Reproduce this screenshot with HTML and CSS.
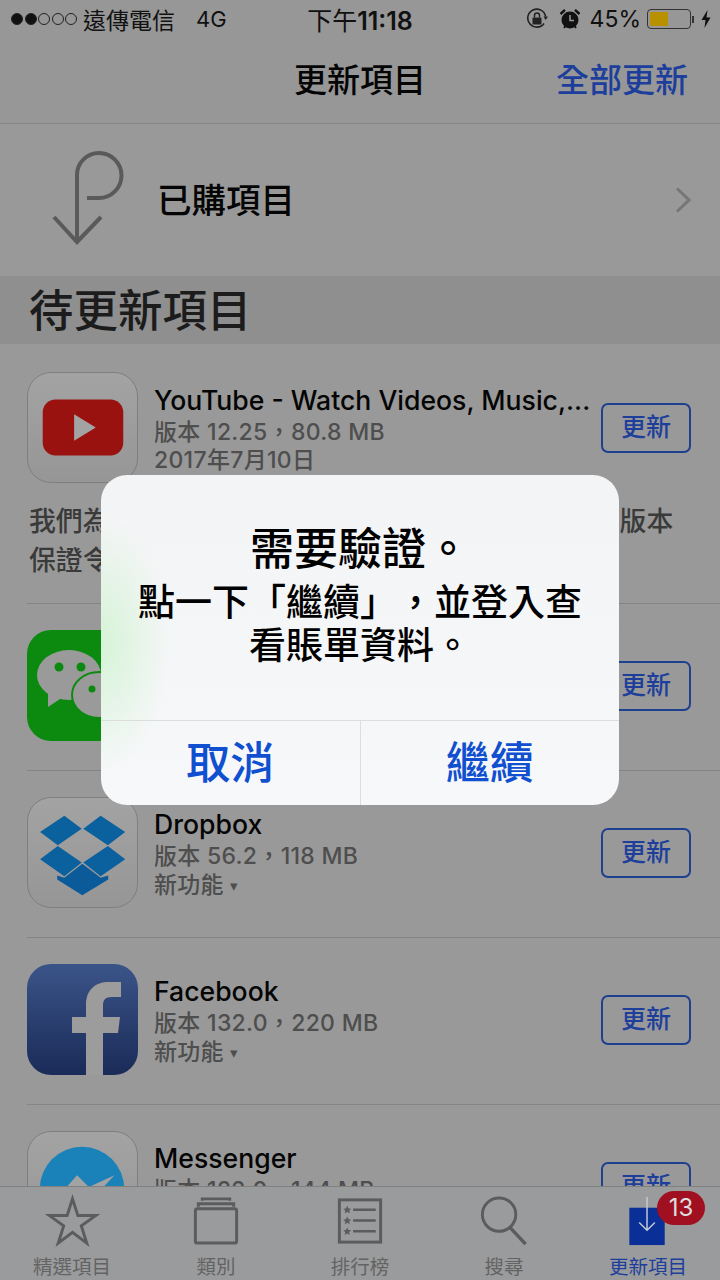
FILE: index.html
```html
<!DOCTYPE html>
<html lang="zh-Hant">
<head>
    <meta charset="UTF-8">
    <meta name="viewport" content="width=device-width, initial-scale=1.0">
    <title>更新項目</title>
    <link rel="stylesheet" href="styles.css">
</head>
<body>
<div class="screen">
    <!-- Status bar -->
    <div class="status-bar">
        <div class="status-left">
            <span class="signal">
                <i class="dot on"></i><i class="dot on"></i><i class="dot"></i><i class="dot"></i><i class="dot"></i>
            </span>
            <span class="carrier">遠傳電信</span>
            <span class="network">4G</span>
        </div>
        <div class="status-time">下午<b>11:18</b></div>
        <div class="status-right">
            <svg class="lock-icon" width="22" height="22" viewBox="0 0 22 22">
                <path d="M18 15.5A9 9 0 1 1 19.6 8.500" fill="none" stroke="#222" stroke-width="1.600"/>
                <path d="M17.500 8.500L22 8.500L19.600 12z" fill="#222"/>
                <rect x="6.500" y="9.500" width="9" height="7" rx="1" fill="#222"/>
                <path d="M8.500 9.500V7.500a2.500 2.500 0 0 1 5 0v2" fill="none" stroke="#222" stroke-width="1.500"/>
            </svg>
            <svg class="alarm-icon" width="22" height="22" viewBox="0 0 22 22">
                <circle cx="11" cy="12" r="8.500" fill="#111"/>
                <path d="M11 7V12.500H15" fill="none" stroke="#999" stroke-width="1.500"/>
                <path d="M1.500 6L6 1.800M20.500 6L16 1.800" stroke="#111" stroke-width="2.400"/>
                <path d="M5 20L6.500 18M17 20L15.500 18" stroke="#111" stroke-width="2"/>
            </svg>
            <span class="percent">45%</span>
            <span class="battery"><i class="battery-fill"></i></span>
            <i class="battery-nub"></i>
            <svg class="bolt" width="10" height="18" viewBox="0 0 10 18"><path d="M6.500 0L0.500 10H4.500L3.500 18L9.500 7.500H5.500z" fill="#111"/></svg>
        </div>
    </div>

    <!-- Nav bar -->
    <div class="nav-bar">
        <h1 class="nav-title">更新項目</h1>
        <a class="nav-action">全部更新</a>
    </div>

    <!-- Purchased -->
    <div class="purchased">
        <svg class="purchased-icon" width="80" height="100" viewBox="0 0 80 100">
            <path d="M29 92V25A22 22 0 0 1 51 3A22.500 22.500 0 0 1 51 48H39" fill="none" stroke="#5a5a5a" stroke-width="4"/>
            <path d="M6 67L29 92L53 67" fill="none" stroke="#5a5a5a" stroke-width="4"/>
        </svg>
        <span class="purchased-label">已購項目</span>
        <svg class="chevron" width="16" height="26" viewBox="0 0 16 26"><path d="M2 1.500L14 13L2 24.500" fill="none" stroke="#767676" stroke-width="3"/></svg>
    </div>

    <h2 class="section-title">待更新項目</h2>

    <!-- Update list -->
    <div class="update-list">
        <div class="update-item">
            <div class="update-main">
                <svg class="app-icon outlined" viewBox="0 0 111 111">
                    <rect x="15" y="27" width="82" height="57" rx="13" fill="#99120f"/>
                    <path d="M47 42L69 55.500L47 69z" fill="#a3a3a3"/>
                </svg>
                <div class="update-info">
                    <div class="app-name">YouTube - Watch Videos, Music,...</div>
                    <div class="app-meta">版本 12.25，80.8 MB</div>
                    <div class="app-meta">2017年7月10日</div>
                </div>
                <a class="update-btn">更新</a>
            </div>
            <p class="update-note">我們為了提供最佳使用體驗，會定期更新應用程式版本<br>保證令您滿意。</p>
        </div>

        <div class="update-item">
            <div class="update-main">
                <svg class="app-icon wechat" viewBox="0 0 111 111">
                    <ellipse cx="42" cy="45" rx="32" ry="25" fill="#9a9a9a"/>
                    <path d="M21 62L21 77L36 67z" fill="#9a9a9a"/>
                    <circle cx="32" cy="37" r="4.500" fill="#0c8a10"/>
                    <circle cx="54" cy="37" r="4.500" fill="#0c8a10"/>
                    <ellipse cx="72" cy="65" rx="27" ry="23" fill="#9a9a9a" stroke="#0c8a10" stroke-width="2"/>
                    <circle cx="65" cy="59" r="3.500" fill="#0c8a10"/>
                    <circle cx="84" cy="59" r="3.500" fill="#0c8a10"/>
                </svg>
                <div class="update-info">
                    <div class="app-name">WeChat</div>
                    <div class="app-meta">版本 6.5.10，112 MB</div>
                    <div class="app-meta">新功能 <span class="caret">▾</span></div>
                </div>
                <a class="update-btn">更新</a>
            </div>
        </div>

        <div class="update-item">
            <div class="update-main">
                <svg class="app-icon outlined" viewBox="0 0 111 111">
                    <path d="M12.300 34.700L37 18L54.700 31.300L30.300 48zM56.300 31.300L74 18L99 34.700L81.300 48zM12.300 62.300L30.300 49L54.700 65.700L37 79.700zM56.300 65.700L81.300 49L99 62.300L74 79.700z" fill="#0b609e"/>
                    <path d="M55.300 67L74 81.300L81.700 79V83L55.300 99L29.700 83V79L37 81.300z" fill="#0b5a99"/>
                </svg>
                <div class="update-info">
                    <div class="app-name">Dropbox</div>
                    <div class="app-meta">版本 56.2，118 MB</div>
                    <div class="app-meta">新功能 <span class="caret">▾</span></div>
                </div>
                <a class="update-btn">更新</a>
            </div>
        </div>

        <div class="update-item">
            <div class="update-main">
                <svg class="app-icon facebook" viewBox="0 0 111 111">
                    <path d="M59 111V69H45V53H59V41C59 26 68 18 82 18H94V33H85C78 33 76 36 76 42V53H93L91 69H76V111z" fill="#9c9c9c"/>
                </svg>
                <div class="update-info">
                    <div class="app-name">Facebook</div>
                    <div class="app-meta">版本 132.0，220 MB</div>
                    <div class="app-meta">新功能 <span class="caret">▾</span></div>
                </div>
                <a class="update-btn">更新</a>
            </div>
        </div>

        <div class="update-item">
            <div class="update-main">
                <svg class="app-icon outlined" viewBox="0 0 111 111">
                    <circle cx="55" cy="58" r="43" fill="#1a82b8"/>
                    <path d="M25 72L50 44L62 56L88 44L62 72L50 60z" fill="#a3a3a3"/>
                </svg>
                <div class="update-info">
                    <div class="app-name">Messenger</div>
                    <div class="app-meta">版本 122.0，144 MB</div>
                    <div class="app-meta">新功能 <span class="caret">▾</span></div>
                </div>
                <a class="update-btn">更新</a>
            </div>
        </div>
    </div>

    <!-- Tab bar -->
    <div class="tab-bar">
        <div class="tab">
            <svg width="56" height="56" viewBox="0 0 56 56"><path d="M28.500 6L34 23H52L37.500 33.500L43 51L28.500 40L14 51L19.500 33.500L5 23H23z" fill="none" stroke="#5c5c5c" stroke-width="3"/></svg>
            <span>精選項目</span>
        </div>
        <div class="tab">
            <svg width="56" height="56" viewBox="0 0 56 56">
                <rect x="7" y="16" width="42" height="35" rx="2" fill="none" stroke="#5c5c5c" stroke-width="3"/>
                <path d="M10 14V11H46V14M14 8V6H42V8" fill="none" stroke="#5c5c5c" stroke-width="3"/>
            </svg>
            <span>類別</span>
        </div>
        <div class="tab">
            <svg width="56" height="56" viewBox="0 0 56 56">
                <rect x="7" y="7" width="42" height="43" fill="none" stroke="#5c5c5c" stroke-width="3"/>
                <path d="M21 17H44M21 28H44M21 39H44" stroke="#5c5c5c" stroke-width="2.500"/>
                <path d="M15 13l1.300 2.700 2.700.3-2 1.900.6 2.800-2.600-1.400-2.600 1.400.6-2.800-2-1.900 2.700-.3zM15 24l1.300 2.700 2.700.3-2 1.900.6 2.800-2.600-1.400-2.600 1.400.6-2.800-2-1.900 2.700-.3zM15 35l1.300 2.700 2.700.3-2 1.900.6 2.800-2.600-1.400-2.600 1.400.6-2.800-2-1.900 2.700-.3z" fill="#5c5c5c"/>
            </svg>
            <span>排行榜</span>
        </div>
        <div class="tab">
            <svg width="56" height="56" viewBox="0 0 56 56">
                <circle cx="23" cy="22" r="17" fill="none" stroke="#5c5c5c" stroke-width="3"/>
                <path d="M34 35L50 52" stroke="#5c5c5c" stroke-width="3.500"/>
            </svg>
            <span>搜尋</span>
        </div>
        <div class="tab active">
            <svg width="56" height="56" viewBox="0 0 56 56">
                <rect x="9" y="15" width="36" height="38" fill="#0a2f96"/>
                <path d="M27 4V38M19 30L27 38L35 30" fill="none" stroke="#c4c9d6" stroke-width="1.500"/>
            </svg>
            <span>更新項目</span>
            <b class="badge">13</b>
        </div>
    </div>

    <!-- Alert -->
    <div class="alert-overlay">
        <div class="alert">
            <div class="alert-body">
                <h3 class="alert-title">需要驗證。</h3>
                <p class="alert-text">點一下「繼續」，並登入查<br>看賬單資料。</p>
            </div>
            <div class="alert-actions">
                <a class="alert-btn">取消</a>
                <a class="alert-btn">繼續</a>
            </div>
        </div>
    </div>
</div>
</body>
</html>
```

FILE: styles.css
```css
* {
    margin: 0;
    padding: 0;
    box-sizing: border-box;
}

body {
    font-family: Inter, "Noto Sans CJK TC", sans-serif;
    background-color: #999;
    color: #050505;
    text-spacing-trim: space-all;
}

.screen {
    position: relative;
    width: 720px;
    height: 1280px;
    overflow: hidden;
    background-color: #999;
}

/* Status bar */
.status-bar {
    height: 40px;
    display: grid;
    grid-template-columns: 1fr auto 1fr;
    align-items: center;
    padding-bottom: 2px;
    background-color: #979797;
    font-size: 23px;
    color: #111;
}

.status-left,
.status-right {
    display: flex;
    align-items: center;
}

.status-left {
    padding-left: 11px;
}

.signal {
    display: flex;
    gap: 1.500px;
    margin-right: 6px;
}

.dot {
    width: 12px;
    height: 12px;
    border-radius: 50%;
    border: 1px solid #222;
}

.dot.on {
    background-color: #111;
}

.network {
    margin-left: 21px;
    font-size: 22px;
}

.status-time {
    font-size: 25px;
}

.status-time b {
    font-weight: 600;
}

.status-right {
    justify-content: flex-end;
    padding-right: 9px;
}

.alarm-icon {
    margin-left: 11px;
}

.percent {
    margin-left: 9px;
    font-size: 23px;
}

.battery {
    width: 44px;
    height: 20px;
    margin-left: 6px;
    padding: 2px;
    border: 1px solid #333;
    border-radius: 4px;
    display: block;
}

.battery-fill {
    display: block;
    width: 18px;
    height: 100%;
    border-radius: 1px;
    background-color: #b89000;
}

.battery-nub {
    width: 2px;
    height: 7px;
    margin-left: 1px;
    background-color: #333;
}

.bolt {
    margin-left: 7px;
}

/* Nav bar */
.nav-bar {
    position: relative;
    height: 84px;
    display: flex;
    align-items: center;
    justify-content: center;
    padding-bottom: 8px;
    background-color: #979797;
    border-bottom: 1px solid #858585;
}

.nav-title {
    font-size: 33px;
    font-weight: 500;
}

.nav-action {
    position: absolute;
    right: 32px;
    font-size: 33px;
    font-weight: 500;
    color: #1d3f9b;
}

/* Purchased row */
.purchased {
    height: 152px;
    display: flex;
    align-items: center;
    padding: 0 29px 0 48px;
}

.purchased-icon {
    margin-right: 29px;
}

.purchased-label {
    flex: 1;
    margin-bottom: 5px;
    font-size: 34.500px;
    font-weight: 500;
}

.section-title {
    height: 68px;
    padding-left: 29px;
    background-color: #8f8f8f;
    font-size: 44.500px;
    font-weight: 500;
    line-height: 70px;
    color: #1c1c1c;
}

/* Update list */
.update-item {
    margin-left: 27px;
    padding: 26px 29px 29px 0;
    border-bottom: 1px solid #858585;
}

.update-item:first-child {
    padding-top: 28px;
}

.update-main {
    display: flex;
    align-items: center;
}

.app-icon {
    flex: none;
    width: 111px;
    height: 111px;
    border-radius: 24px;
    margin-right: 16px;
}

.app-icon.outlined {
    border: 1px solid #7f7f7f;
    background: linear-gradient(#a3a3a3, #969696);
}

.app-icon.wechat {
    background-color: #0c8a10;
}

.app-icon.facebook {
    background: linear-gradient(#3b5488, #1a2b58);
}

.update-info {
    flex: 1;
    min-width: 0;
    padding-top: 4px;
}

.app-name {
    margin-bottom: 3px;
    font-size: 26.600px;
    font-weight: 500;
    line-height: 30px;
    white-space: nowrap;
}

.app-meta {
    font-size: 23px;
    font-weight: 500;
    letter-spacing: 0.300px;
    line-height: 28.500px;
    color: #4e4e4e;
}

.caret {
    font-size: 15px;
    vertical-align: 2px;
}

.update-btn {
    flex: none;
    width: 90px;
    height: 50px;
    margin-top: 1px;
    border: 2px solid #1f3f8f;
    border-radius: 7px;
    font-size: 25px;
    font-weight: 500;
    line-height: 45px;
    text-align: center;
    color: #1d3f9b;
}

.update-note {
    margin-top: 19px;
    margin-bottom: -6px;
    padding-left: 2px;
    font-size: 26.850px;
    font-weight: 500;
    line-height: 39px;
    white-space: nowrap;
    color: #3a3a3a;
}

/* Tab bar */
.tab-bar {
    position: absolute;
    left: 0;
    right: 0;
    bottom: 0;
    height: 94px;
    display: flex;
    background-color: #9a9b9c;
    border-top: 1px solid #808080;
}

.tab {
    position: relative;
    flex: 1;
    display: flex;
    flex-direction: column;
    align-items: center;
    padding-top: 6px;
    font-size: 19.500px;
    color: #636363;
}

.tab span {
    margin-top: 6px;
    line-height: 26px;
}

.tab.active {
    color: #1d3f9b;
}

.badge {
    position: absolute;
    top: 4px;
    left: 81px;
    width: 48px;
    height: 34px;
    border-radius: 17px;
    background-color: #a01020;
    color: #ddd;
    font-size: 24px;
    font-weight: 400;
    line-height: 34px;
    text-align: center;
}

/* Alert */
.alert-overlay {
    position: absolute;
    top: 0;
    left: 0;
    width: 100%;
    height: 100%;
    display: flex;
    align-items: center;
    justify-content: center;
}

.alert {
    width: 518px;
    height: 330px;
    display: flex;
    flex-direction: column;
    border-radius: 26px;
    overflow: hidden;
    background:
        radial-gradient(ellipse 70px 130px at 0 170px, rgba(175, 240, 175, 0.45), rgba(175, 240, 175, 0)),
        linear-gradient(#f3f4f5, #f7f8fa);
}

.alert-body {
    flex: 1;
    padding-top: 47px;
    text-align: center;
}

.alert-title {
    font-size: 44px;
    font-weight: 500;
    line-height: 54px;
    color: #000;
}

.alert-text {
    margin-top: 5px;
    font-size: 37px;
    font-weight: 500;
    line-height: 43px;
    color: #000;
}

.alert-actions {
    height: 85px;
    display: flex;
    border-top: 1px solid #dcdddf;
}

.alert-btn {
    flex: 1;
    font-size: 44px;
    font-weight: 500;
    line-height: 85px;
    text-align: center;
    color: #0f4fd0;
}

.alert-btn + .alert-btn {
    border-left: 1px solid #dcdddf;
}
```
